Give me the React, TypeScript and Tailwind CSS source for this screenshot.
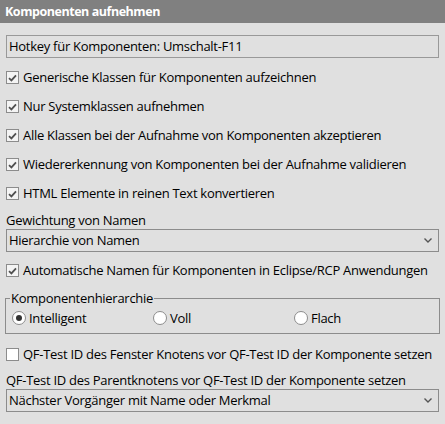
import React from "react";

const font = { fontFamily: '"Open Sans", "Noto Sans", "Liberation Sans", sans-serif' };

function Check({ checked }: { checked: boolean }) {
  return (
    <span
      className={`flex h-[13px] w-[13px] shrink-0 items-center justify-center border border-[#8c8c8c] ${
        checked ? "bg-[#f4f4f4]" : "bg-white"
      }`}
    >
      {checked && (
        <svg width="9" height="8" viewBox="0 0 9 8">
          <path d="M1 4.2 L3.4 6.4 L8 1.4" fill="none" stroke="#505050" strokeWidth="1.8" />
        </svg>
      )}
    </span>
  );
}

function CheckRow({ label, checked = true, className = "" }: { label: string; checked?: boolean; className?: string }) {
  return (
    <div className={`flex h-[29px] items-center gap-[4px] whitespace-nowrap pl-[6px] ${className}`}>
      <Check checked={checked} />
      <span>{label}</span>
    </div>
  );
}

function Radio({ label, selected = false }: { label: string; selected?: boolean }) {
  return (
    <div className="flex items-center gap-[3px]">
      <span className="flex h-[14px] w-[14px] items-center justify-center rounded-full border border-[#8c8c8c] bg-white">
        {selected && <span className="h-[6px] w-[6px] rounded-full bg-[#333333]" />}
      </span>
      <span>{label}</span>
    </div>
  );
}

function Select({ value }: { value: string }) {
  return (
    <div className="mx-[6px] flex h-[23px] items-center justify-between border border-[#8c8c8c] bg-[#e0e0e0] pl-[2px] pr-[6px]">
      <span>{value}</span>
      <svg width="8" height="5" viewBox="0 0 8 5">
        <path d="M0.5 0.5 L4 4 L7.5 0.5" fill="none" stroke="#555555" strokeWidth="1.4" />
      </svg>
    </div>
  );
}

export default function App() {
  return (
    <div
      className="h-[424px] w-[445px] bg-[#e0e0e0] text-[13px] leading-[17px] tracking-[-0.28px] text-black"
      style={font}
    >
      <div className="flex h-[23px] items-center bg-[#808080] px-[5px] text-[12.5px] font-bold tracking-[-0.45px] text-white">
        Komponenten aufnehmen
      </div>
      <div className="pt-[12px]">
        <div className="mx-[6px] flex h-[23px] items-center border border-[#999999] pl-[2px]">
          Hotkey für Komponenten: Umschalt-F11
        </div>
        <div className="mt-[5px]">
          <CheckRow label="Generische Klassen für Komponenten aufzeichnen" />
          <CheckRow label="Nur Systemklassen aufnehmen" />
          <CheckRow label="Alle Klassen bei der Aufnahme von Komponenten akzeptieren" />
          <CheckRow label="Wiedererkennung von Komponenten bei der Aufnahme validieren" />
          <CheckRow label="HTML Elemente in reinen Text konvertieren" />
        </div>
        <div className="mt-[4px] h-[17px] pl-[6px]">Gewichtung von Namen</div>
        <Select value="Hierarchie von Namen" />
        <CheckRow className="mt-[4px]" label="Automatische Namen für Komponenten in Eclipse/RCP Anwendungen" />
        <fieldset className="mx-[5px] mt-[4px] border border-[#8c8c8c] pb-[4px] pl-[4px]">
          <legend className="h-[18px] px-[1px] leading-[18px]">Komponentenhierarchie</legend>
          <div className="grid h-[22px] grid-cols-[141px_141px_1fr] items-center pl-[2px]">
            <Radio label="Intelligent" selected />
            <Radio label="Voll" />
            <Radio label="Flach" />
          </div>
        </fieldset>
        <CheckRow className="mt-[6px]" checked={false} label="QF-Test ID des Fenster Knotens vor QF-Test ID der Komponente setzen" />
        <div className="mt-[3px] h-[17px] whitespace-nowrap pl-[6px]">
          QF-Test ID des Parentknotens vor QF-Test ID der Komponente setzen
        </div>
        <Select value="Nächster Vorgänger mit Name oder Merkmal" />
      </div>
    </div>
  );
}
